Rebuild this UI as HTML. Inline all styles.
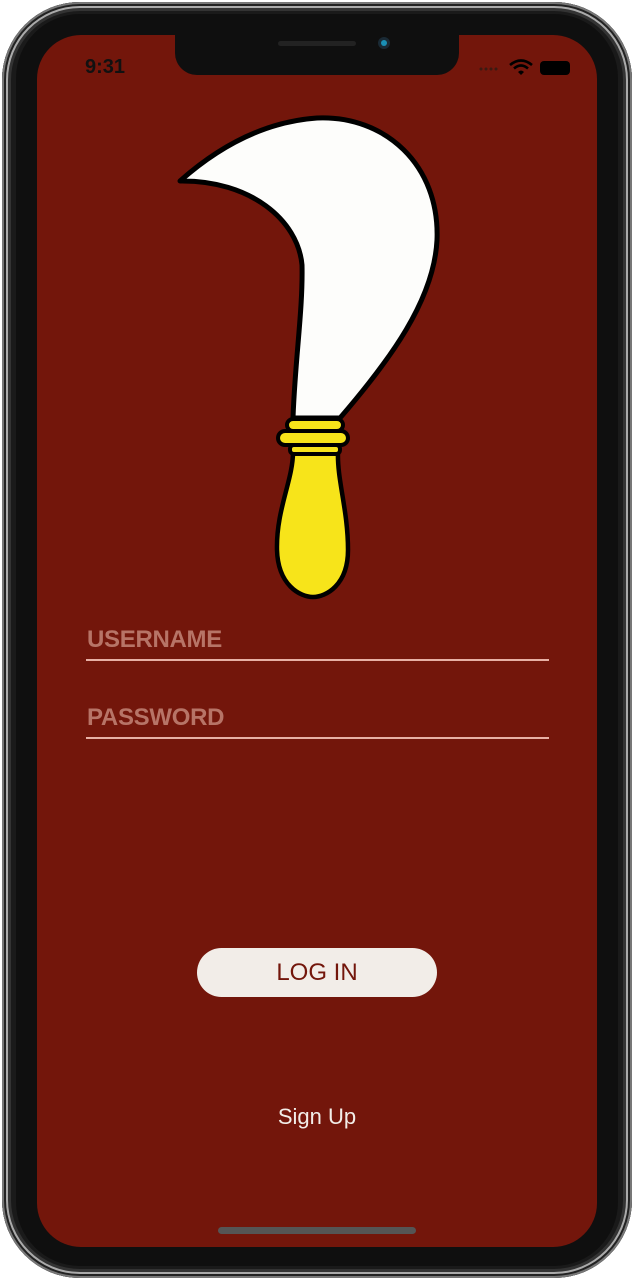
<!DOCTYPE html>
<html><head><meta charset="utf-8"><style>
html,body{margin:0;padding:0;background:#fff;width:634px;height:1280px;overflow:hidden;font-family:"Liberation Sans",Arial,sans-serif}
.frame{position:absolute;left:2px;top:2px;width:630px;height:1276px;border-radius:78px;background:#1a1a1a;box-shadow:inset 0 0 0 2px #777,inset 0 0 0 4px #222,inset 0 0 0 6px #aaa,inset 0 0 0 9px #333}
.bez{position:absolute;left:16px;top:14px;width:602px;height:1252px;border-radius:64px;background:#0f0f0f}
.screen{position:absolute;left:37px;top:35px;width:560px;height:1212px;border-radius:44px;background:#73160b;overflow:hidden}
.notch{position:absolute;left:138px;top:-2px;width:284px;height:42px;background:#0f0f0f;border-radius:0 0 22px 22px}
.spk{position:absolute;left:103px;top:8px;width:78px;height:5px;border-radius:3px;background:#222}
.cam{position:absolute;left:203px;top:4px;width:12px;height:12px;border-radius:50%;background:#1a2a35}
.cam:after{content:"";position:absolute;left:3px;top:3px;width:6px;height:6px;border-radius:50%;background:#1a8fb5}
.time{position:absolute;left:48px;top:21px;font-size:20px;font-weight:bold;color:#111}
.lbl{position:absolute;left:50px;font-size:24px;color:#b77467;font-weight:bold;letter-spacing:-0.3px}
.line{position:absolute;left:49px;width:463px;height:2px;background:#e8b0a5}
.btn{position:absolute;left:160px;top:913px;width:240px;height:49px;border-radius:25px;background:#f2ede8;color:#73160b;font-size:24px;text-align:center;line-height:49px}
.su{position:absolute;left:0;width:560px;top:1069px;text-align:center;color:#f2ede8;font-size:22px}
.home{position:absolute;left:181px;top:1192px;width:198px;height:7px;border-radius:4px;background:#555}
</style></head><body>
<div class="frame"></div>
<div class="bez"></div>
<div class="screen">
 <div class="notch"><div class="spk"></div><div class="cam"></div></div>
 <div class="time">9:31</div>
 <svg style="position:absolute;left:440px;top:22px" width="100" height="20">
  <g fill="#3a1a12"><circle cx="4" cy="12" r="1.5"/><circle cx="9" cy="12" r="1.5"/><circle cx="14" cy="12" r="1.5"/><circle cx="19" cy="12" r="1.5"/></g>
  <path d="M33 8 Q44 -1 55 8" stroke="#000" stroke-width="2.6" fill="none"/>
  <path d="M37 11.5 Q44 5.5 51 11.5" stroke="#000" stroke-width="2.6" fill="none"/>
  <path d="M41 15 L44 18 L47 15 Q44 12 41 15Z" fill="#000"/>
  <rect x="63" y="4" width="30" height="14" rx="4" fill="#000"/>
 </svg>
 <svg style="position:absolute;left:-37px;top:-35px" width="634" height="650">
  <path d="M180 181 C215 150 260 122 317 118 C385 115 440 165 437 240 C434 300 390 360 340 418 L293 418 C295 360 303 310 302 265 C298 220 250 180 180 181 Z" fill="#fdfdfb" stroke="#000" stroke-width="5" stroke-linejoin="round"/>
  <path d="M293 452 C293 480 276 510 277 550 C278 585 300 597 313 597 C326 597 348 585 348 550 C348 510 337 480 338 452 Z" fill="#f7e41a" stroke="#000" stroke-width="4.5"/>
  <rect x="287" y="419" width="56" height="12" rx="6" fill="#f7e41a" stroke="#000" stroke-width="4"/>
  <rect x="278" y="431" width="70" height="14" rx="7" fill="#f7e41a" stroke="#000" stroke-width="4"/>
  <rect x="290" y="445" width="50" height="9" rx="4" fill="#f7e41a" stroke="#000" stroke-width="4"/>
 </svg>
 <div class="lbl" style="top:591px">USERNAME</div>
 <div class="line" style="top:624px"></div>
 <div class="lbl" style="top:669px">PASSWORD</div>
 <div class="line" style="top:702px"></div>
 <div class="btn">LOG IN</div>
 <div class="su">Sign Up</div>
 <div class="home"></div>
</div>
</body></html>
